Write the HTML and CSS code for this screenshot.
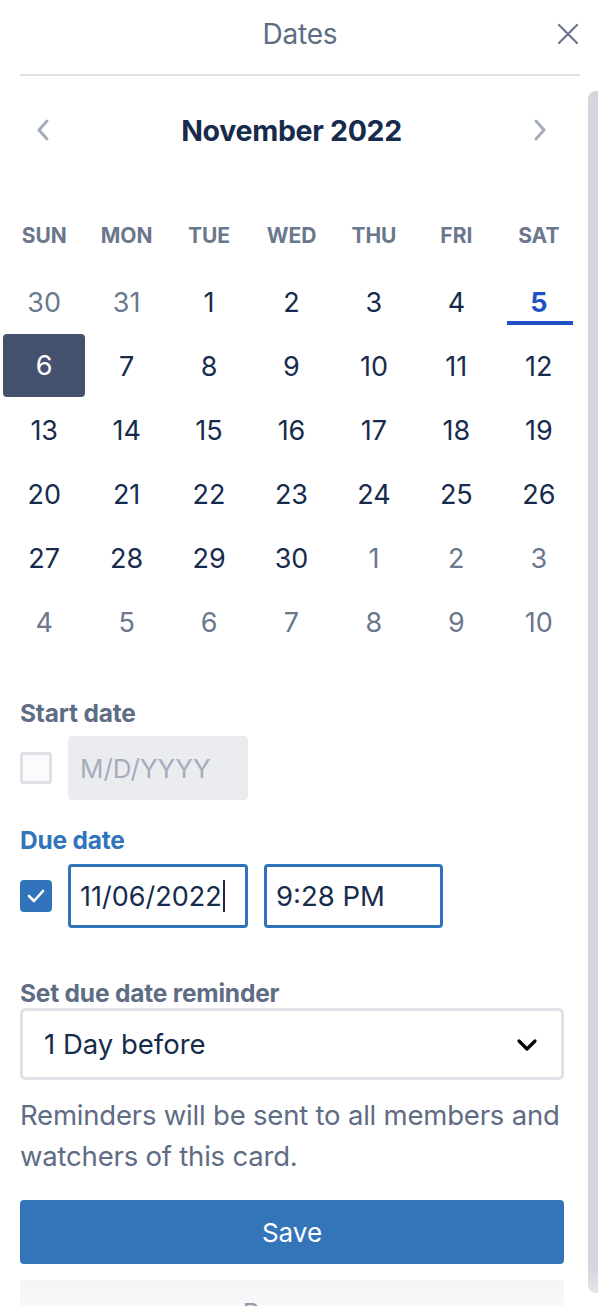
FILE: index.html
```html
<!DOCTYPE html>
<html>
<head>
<meta charset="utf-8">
<link rel="stylesheet" href="styles.css">
</head>
<body>
<div class="popover">
  <div class="header">
    <span class="title">Dates</span>
    <button class="close" aria-label="Close">
      <svg width="22" height="22" viewBox="0 0 22 22"><path d="M2 2 L20 20 M20 2 L2 20" stroke="#6b778c" stroke-width="2.2" stroke-linecap="round" fill="none"/></svg>
    </button>
  </div>
  <div class="body">
    <div class="content">
      <div class="nav">
        <button class="nav-btn"><svg width="14" height="24" viewBox="0 0 14 24"><path d="M11 3 L3 12 L11 21" stroke="#a5adba" stroke-width="3" stroke-linecap="round" stroke-linejoin="round" fill="none"/></svg></button>
        <span class="month">November 2022</span>
        <button class="nav-btn"><svg width="14" height="24" viewBox="0 0 14 24"><path d="M3 3 L11 12 L3 21" stroke="#a5adba" stroke-width="3" stroke-linecap="round" stroke-linejoin="round" fill="none"/></svg></button>
      </div>
      <div class="grid">
        <div class="dow">SUN</div><div class="dow">MON</div><div class="dow">TUE</div><div class="dow">WED</div><div class="dow">THU</div><div class="dow">FRI</div><div class="dow">SAT</div>
        <div class="day other">30</div><div class="day other">31</div><div class="day">1</div><div class="day">2</div><div class="day">3</div><div class="day">4</div><div class="day today">5</div>
        <div class="day selected">6</div><div class="day">7</div><div class="day">8</div><div class="day">9</div><div class="day">10</div><div class="day">11</div><div class="day">12</div>
        <div class="day">13</div><div class="day">14</div><div class="day">15</div><div class="day">16</div><div class="day">17</div><div class="day">18</div><div class="day">19</div>
        <div class="day">20</div><div class="day">21</div><div class="day">22</div><div class="day">23</div><div class="day">24</div><div class="day">25</div><div class="day">26</div>
        <div class="day">27</div><div class="day">28</div><div class="day">29</div><div class="day">30</div><div class="day other">1</div><div class="day other">2</div><div class="day other">3</div>
        <div class="day other">4</div><div class="day other">5</div><div class="day other">6</div><div class="day other">7</div><div class="day other">8</div><div class="day other">9</div><div class="day other">10</div>
      </div>

      <div class="label start-label">Start date</div>
      <div class="field-row">
        <span class="checkbox"></span>
        <div class="input disabled">M/D/YYYY</div>
      </div>

      <div class="label due-label">Due date</div>
      <div class="field-row">
        <span class="checkbox checked">
          <svg width="18" height="14" viewBox="0 0 18 14"><path d="M2 7 L7 12 L16 2" stroke="#fff" stroke-width="2.6" stroke-linecap="round" stroke-linejoin="round" fill="none"/></svg>
        </span>
        <div class="input focused">11/06/2022<span class="caret"></span></div>
        <div class="input focused time">9:28 PM</div>
      </div>

      <div class="label reminder-label">Set due date reminder</div>
      <div class="select">
        <span>1 Day before</span>
        <svg width="22" height="14" viewBox="0 0 22 14"><path d="M3 3 L11 11 L19 3" stroke="#000" stroke-width="3.2" stroke-linecap="round" stroke-linejoin="round" fill="none"/></svg>
      </div>
      <p class="hint">Reminders will be sent to all members and watchers of this card.</p>
      <button class="btn primary">Save</button>
      <button class="btn secondary">Remove</button>
    </div>
    <div class="scrollbar"></div>
  </div>
  <div class="fade"></div>
</div>
</body>
</html>
```
FILE: styles.css
```css
* { box-sizing: border-box; }
html, body { margin: 0; padding: 0; background: #fff; }
body {
  font-family: Inter, "Noto Sans", sans-serif;
  color: #172b4d;
  width: 598px;
  height: 1306px;
  overflow: hidden;
}
button { font-family: inherit; border: none; background: none; padding: 0; cursor: pointer; }

.popover { position: relative; height: 1306px; overflow: hidden; }

.header {
  position: relative;
  margin: 0 18px 0 20px;
  height: 76px;
  border-bottom: 2px solid #dfe1e6;
  display: flex;
  align-items: center;
  justify-content: center;
  padding-bottom: 6px;
}
.title { font-size: 28px; color: #5e6c84; letter-spacing: -0.2px; }
.close {
  position: absolute;
  right: 1px;
  top: 23px;
  width: 22px; height: 22px;
  display: flex;
}

.body { display: flex; }
.content { width: 564px; padding-left: 20px; }
.scrollbar {
  margin-left: 24px;
  margin-top: 15px;
  width: 10px;
  height: 1202px;
  background: #d3d6dd;
  border-radius: 8px 0 0 8px;
}

.nav {
  height: 108px;
  display: flex;
  align-items: center;
  justify-content: space-between;
  padding: 0 17px 0 16px;
}
.nav-btn { width: 14px; height: 24px; display: flex; }
.month { font-size: 28.5px; font-weight: 700; color: #172b4d; letter-spacing: -0.3px; }

.grid {
  margin-left: -17px;
  width: 577px;
  display: grid;
  grid-template-columns: repeat(7, 1fr);
  grid-template-rows: 86px repeat(6, 64px);
}
.dow {
  display: flex;
  align-items: center;
  justify-content: center;
  padding-top: 16px;
  font-size: 21px;
  font-weight: 700;
  color: #6b778c;
}
.day {
  display: flex;
  align-items: center;
  justify-content: center;
  font-size: 27px;
  color: #172b4d;
  position: relative;
}
.day.other { color: #6b778c; }
.day.today { color: #1f51c6; font-weight: 700; }
.day.today::after {
  content: "";
  position: absolute;
  left: 9px; right: 7px; bottom: 9px;
  height: 4px;
  background: #1f51c6;
}
.day.selected {
  background: #44526d;
  color: #fff;
  border-radius: 4px;
  margin: 0 0 1px 0;
  width: 82px;
}

.label { font-size: 24.5px; font-weight: 700; color: #5e6c84; display: flex; align-items: center; letter-spacing: -0.2px; }
.start-label { margin-top: 41px; height: 36px; margin-bottom: 5px; }
.due-label { margin-top: 23px; height: 34px; margin-bottom: 7px; color: #3174bb; }
.reminder-label { margin-top: 50px; height: 30px; }

.field-row { display: flex; align-items: center; gap: 16px; height: 64px; }
.checkbox {
  width: 32px; height: 32px;
  border: 3px solid #dfe1e6;
  background: #fafbfc;
  border-radius: 4px;
  display: flex; align-items: center; justify-content: center;
}
.checkbox.checked { background: #3174bb; border-color: #3174bb; }
.input {
  width: 180px; height: 64px;
  border-radius: 4px;
  font-size: 27px;
  display: flex; align-items: center;
  padding-left: 12px;
}
.input.disabled { background: #ebecf0; color: #a5adba; font-size: 26px; }
.input.focused { border: 3px solid #3174bb; color: #172b4d; padding-left: 9px; }
.input.time { width: 179px; font-size: 27.5px; }
.caret { display: inline-block; width: 2px; height: 32px; background: #172b4d; margin-left: 1px; }

.select {
  height: 72px;
  border: 3px solid #dfe1e6;
  border-radius: 5px;
  display: flex; align-items: center; justify-content: space-between;
  padding: 0 23px 0 21px;
  font-size: 27.5px;
  color: #172b4d;
}
.select svg { margin-top: 2px; }

.hint {
  margin: 15px 0 0;
  font-size: 27.5px;
  line-height: 41px;
  color: #5e6c84;
  letter-spacing: -0.2px;
}
.btn {
  display: block;
  width: 544px; height: 64px;
  border-radius: 4px;
  font-size: 26px;
}
.primary { margin-top: 23px; background: #3475ba; color: #fff; }
.secondary { margin-top: 16px; background: #f1f2f4; color: #172b4d; }

.fade {
  position: absolute;
  left: 0; right: 0; bottom: 0;
  height: 40px;
  background: linear-gradient(rgba(255,255,255,0), rgba(255,255,255,0.55));
  pointer-events: none;
}
```
